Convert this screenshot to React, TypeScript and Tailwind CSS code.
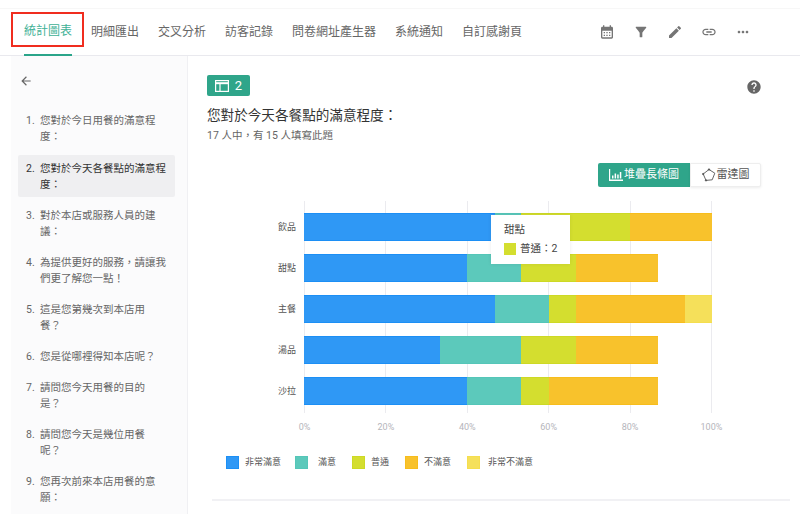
import { MdArrowBack, MdCalendarMonth, MdEdit, MdFilterAlt, MdHelp, MdLink, MdMoreHoriz } from "react-icons/md";

const tabs = ["統計圖表", "明細匯出", "交叉分析", "訪客記錄", "問卷網址產生器", "系統通知", "自訂感謝頁"];

// full-width punctuation written as escapes
const questions = [
  ["您對於今日用餐的滿意程", "度\uFF1A"],
  ["您對於今天各餐點的滿意程", "度\uFF1A"],
  ["對於本店或服務人員的建", "議\uFF1A"],
  ["為提供更好的服務\uFF0C請讓我", "們更了解您一點\uFF01"],
  ["這是您第幾次到本店用", "餐\uFF1F"],
  ["您是從哪裡得知本店呢\uFF1F"],
  ["請問您今天用餐的目的", "是\uFF1F"],
  ["請問您今天是幾位用餐", "呢\uFF1F"],
  ["您再次前來本店用餐的意", "願\uFF1A"],
];

const series = [
  { name: "非常滿意", cls: "bg-[#2f98f5] border-[#1c8ff5]", swatch: "w-[13px] mr-[6px]", text: "mr-[14px]" },
  { name: "滿意", cls: "bg-[#5cc9bb] border-[#55c6b8]", swatch: "w-[13px] mr-[10px]", text: "mr-[16px]" },
  { name: "普通", cls: "bg-[#d4de2f] border-[#cdd925]", swatch: "w-[13px] mr-[6px]", text: "mr-[16px]" },
  { name: "不滿意", cls: "bg-[#f8c22c] border-[#f7bd1c]", swatch: "w-[13px] mr-[6px]", text: "mr-[16px]" },
  { name: "非常不滿意", cls: "bg-[#f5e05a] border-[#f5de4e]", swatch: "w-[13px] mr-[8px]", text: "" },
];

const rows = [
  { label: "飲品", values: [46.7, 6.6, 26.7, 20, 0] },
  { label: "甜點", values: [40, 13.3, 13.4, 20, 0] },
  { label: "主餐", values: [46.7, 13.3, 6.7, 26.6, 6.7] },
  { label: "湯品", values: [33.3, 20, 13.4, 20, 0] },
  { label: "沙拉", values: [40, 13.3, 6.7, 26.7, 0] },
];

const ticks = ["0%", "20%", "40%", "60%", "80%", "100%"];

function TableIcon() {
  return (
    <svg width="14" height="12" viewBox="0 0 14 12" fill="none" stroke="white" strokeWidth="1.2">
      <rect x="0.6" y="0.6" width="12.8" height="10.8" />
      <path d="M0.6 3.2h12.8" strokeWidth="2" />
      <path d="M5 3.5v8" />
    </svg>
  );
}

function BarsIcon() {
  return (
    <svg width="14" height="12" viewBox="0 0 14 12" fill="white">
      <path d="M0 0h1.2v10.6H14V12H0z" />
      <rect x="3" y="6.5" width="1.5" height="3" />
      <rect x="5.6" y="4.5" width="1.5" height="5" />
      <rect x="8.2" y="5.5" width="1.5" height="4" />
      <rect x="10.8" y="3" width="1.5" height="6.5" />
    </svg>
  );
}

function RadarIcon() {
  return (
    <svg width="14" height="14" viewBox="0 0 14 14" fill="none" stroke="#555" strokeWidth="0.9">
      <path d="M7 1.5 12.8 5.2 10.2 11.8 4 12.4 1.2 6z" />
      <circle cx="7" cy="1.5" r="0.7" fill="#555" />
      <circle cx="1.2" cy="6" r="0.7" fill="#555" />
      <circle cx="4" cy="12.4" r="0.7" fill="#555" />
    </svg>
  );
}

export default function App() {
  return (
    <div
      lang="zh-TW"
      className="w-[800px] h-[514px] overflow-hidden bg-white pt-2 font-['Roboto','Noto_Sans_CJK_TC',sans-serif] text-[#444]"
    >
      <header className="relative h-[48px] flex items-stretch border-t border-b border-t-[#f7f7f7] border-b-[#e9e9ee] pl-6 pr-[49px]">
        <nav className="flex gap-[19px]">
          {tabs.map((t, i) => (
            <div
              key={t}
              className={
                i === 0
                  ? "flex items-center pb-px text-[12px] text-[#3fb196] border-b-2 border-[#2aa58a] h-[47px]"
                  : "flex items-center pb-px text-[12px] text-[#666] h-[47px]"
              }
            >
              {t}
            </div>
          ))}
        </nav>
        <div className="ml-auto flex items-center gap-[18px] text-[#757575] pb-px">
          <MdCalendarMonth size={16} />
          <MdFilterAlt size={16} />
          <MdEdit size={16} />
          <MdLink size={16} />
          <MdMoreHoriz size={16} />
        </div>
        <div className="absolute left-[11px] top-[3px] w-[73px] h-[35px] border-2 border-[#f02d1f]" />
      </header>

      <div className="flex h-[458px]">
        <aside className="ml-[11px] w-[177px] shrink-0 bg-[#fbfbfc] border-r border-[#f0f0f3] pl-[7px] pr-[12px] pt-[18px]">
          <MdArrowBack size={14} className="ml-[1px] text-[#666]" />
          <ol className="mt-[19px]">
            {questions.map((lines, i) => (
              <li
                key={i}
                className={
                  i === 1
                    ? "flex rounded-[2px] bg-[#efeff1] pl-2 pt-[6px] pb-[4px] mb-[5px] text-[10.5px] leading-4 text-[#333]"
                    : "flex pl-2 pt-[6px] pb-[4px] mb-[5px] first:mb-[6px] text-[10.5px] leading-4 text-[#666]"
                }
              >
                <span className="w-[14px] shrink-0">{i + 1}.</span>
                <span>
                  {lines.map((l) => (
                    <span key={l} className="block whitespace-nowrap">
                      {l}
                    </span>
                  ))}
                </span>
              </li>
            ))}
          </ol>
        </aside>

        <main className="flex-1 pl-[19px] pt-[19px] pr-[10px]">
          <div className="flex items-start justify-between pr-[28px]">
            <div className="flex h-[21px] w-[43px] items-center justify-center gap-[6px] rounded-[2px] bg-[#2fa58a] text-[13px] text-white">
              <TableIcon />2
            </div>
            <MdHelp size={16} className="mt-[4px] text-[#666]" />
          </div>
          <h2 className="mt-[9px] text-[13.6px] leading-5 text-[#333]">{"您對於今天各餐點的滿意程度\uFF1A"}</h2>
          <p className="mt-[4px] text-[10.5px] leading-[14px] text-[#666]">{"17 人中\uFF0C有 15 人填寫此題"}</p>

          <div className="mt-[20px] flex justify-end pr-[29px]">
            <button className="flex h-[24px] w-[92px] items-center justify-center gap-px rounded-l-[2px] bg-[#2fa58a] text-[11px] text-white">
              <BarsIcon />
              堆疊長條圖
            </button>
            <button className="flex h-[24px] w-[71px] items-center justify-center gap-px rounded-r-[2px] border border-[#eeeeee] bg-white text-[11px] text-[#555] shadow-[0_1px_3px_rgba(0,0,0,0.08)]">
              <RadarIcon />
              雷達圖
            </button>
          </div>

          <div className="relative mt-[14px] pl-[97px]">
            <div className="absolute left-[97px] top-0 h-[212px] w-[408px] flex justify-between">
              {ticks.map((t) => (
                <div key={t} className="h-full w-px bg-[#ebebef]" />
              ))}
            </div>

            <div className="relative flex flex-col gap-[13px] pt-[12px]">
              {rows.map((r) => (
                <div key={r.label} className="flex h-[28px] items-center">
                  <span className="ml-[-97px] w-[89px] pt-[2px] text-right text-[9px] text-[#555] mr-2">{r.label}</span>
                  <div className="flex h-full w-[408px]">
                    {r.values.map((v, i) =>
                      v > 0 ? (
                        <div
                          key={i}
                          className={"h-full border-y " + series[i].cls}
                          style={{ width: v + "%" }}
                        />
                      ) : null
                    )}
                  </div>
                </div>
              ))}
            </div>

            <div className="absolute left-[284px] top-[14px] w-[79px] h-[49px] bg-white px-[13px] pt-[7px] shadow-[0_0_4px_rgba(0,0,0,0.08)]">
              <div className="text-[10.5px] leading-4 text-[#444]">甜點</div>
              <div className="mt-[4px] flex items-center gap-[4px] text-[10.5px] leading-[14px] text-[#444] whitespace-nowrap">
                <span className="h-[12px] w-[12px] shrink-0 bg-[#d4de2f]" />
                {"普通\uFF1A2"}
              </div>
            </div>

            <div className="mt-[16px] flex w-[408px] justify-between text-[9px] leading-3 text-[#b5b5bb]">
              {ticks.map((t) => (
                <div key={t} className="flex w-px justify-center whitespace-nowrap">
                  {t}
                </div>
              ))}
            </div>
          </div>

          <div className="mt-[23px] ml-[19px] flex items-center text-[9px] leading-[13px] text-[#555]">
            {series.map((s) => (
              <div key={s.name} className={"flex items-center " + s.text}>
                <span className={"h-[13px] border " + s.cls + " " + s.swatch} />
                {s.name}
              </div>
            ))}
          </div>

          <div className="mt-[30px] ml-[5px] h-[2px] bg-[#f1f1f4]" />
        </main>
      </div>
    </div>
  );
}
